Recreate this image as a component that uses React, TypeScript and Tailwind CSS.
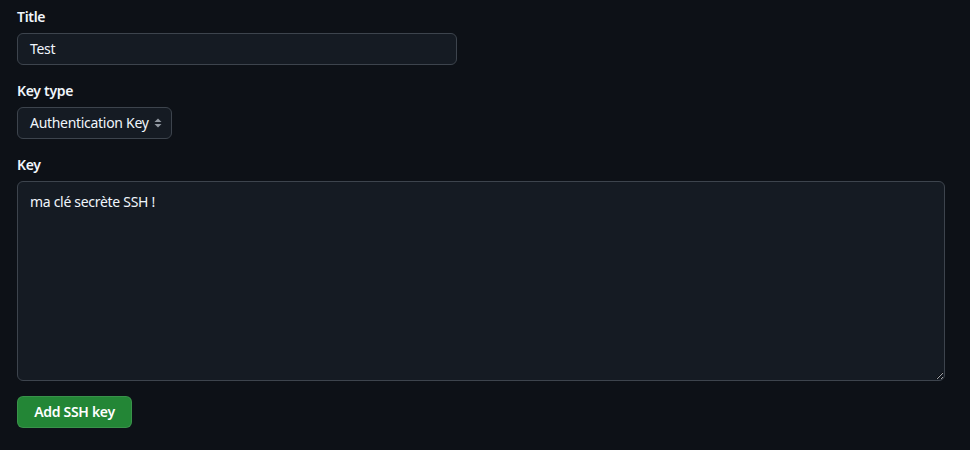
export default function App() {
  return (
    <div
      className="min-h-[450px] w-[970px] bg-[#0d1117] px-[17px] pt-[7px] text-[14px] leading-5 tracking-[-0.3px] text-[#f0f6fc]"
      style={{ fontFamily: '"Noto Sans", "Liberation Sans", sans-serif' }}
    >
      <div className="flex flex-col">
        <label className="mb-[6px] font-semibold">Title</label>
        <div className="flex h-8 w-[440px] items-center rounded-md border border-[#3d444d] bg-[#151b23] px-3">
          Test
        </div>

        <label className="mb-[6px] mt-4 font-semibold">Key type</label>
        <div className="flex h-8 w-[155px] items-center justify-between whitespace-nowrap rounded-md border border-[#3d444d] bg-[#151b23] pl-3 pr-2">
          <span>Authentication Key</span>
          <svg width="10" height="12" viewBox="0 0 10 12" className="flex-none text-[#9198a1]">
            <path d="M5 1.5 L8.5 5 H1.5 Z" fill="currentColor" />
            <path d="M5 10.5 L8.5 7 H1.5 Z" fill="currentColor" />
          </svg>
        </div>

        <label className="mb-[6px] mt-4 font-semibold">Key</label>
        <textarea
          className="h-[200px] w-[928px] rounded-md border border-[#3d444d] bg-[#151b23] px-3 pt-[10px] text-[14px] leading-5 tracking-[-0.3px] text-[#f0f6fc] outline-none"
          defaultValue="ma clé secrète SSH !"
        />

        <div className="mt-[15px]">
          <button className="h-8 w-[115px] rounded-md border border-[#ffffff1a] bg-[#238636] font-semibold text-white">
            Add SSH key
          </button>
        </div>
      </div>
    </div>
  );
}
